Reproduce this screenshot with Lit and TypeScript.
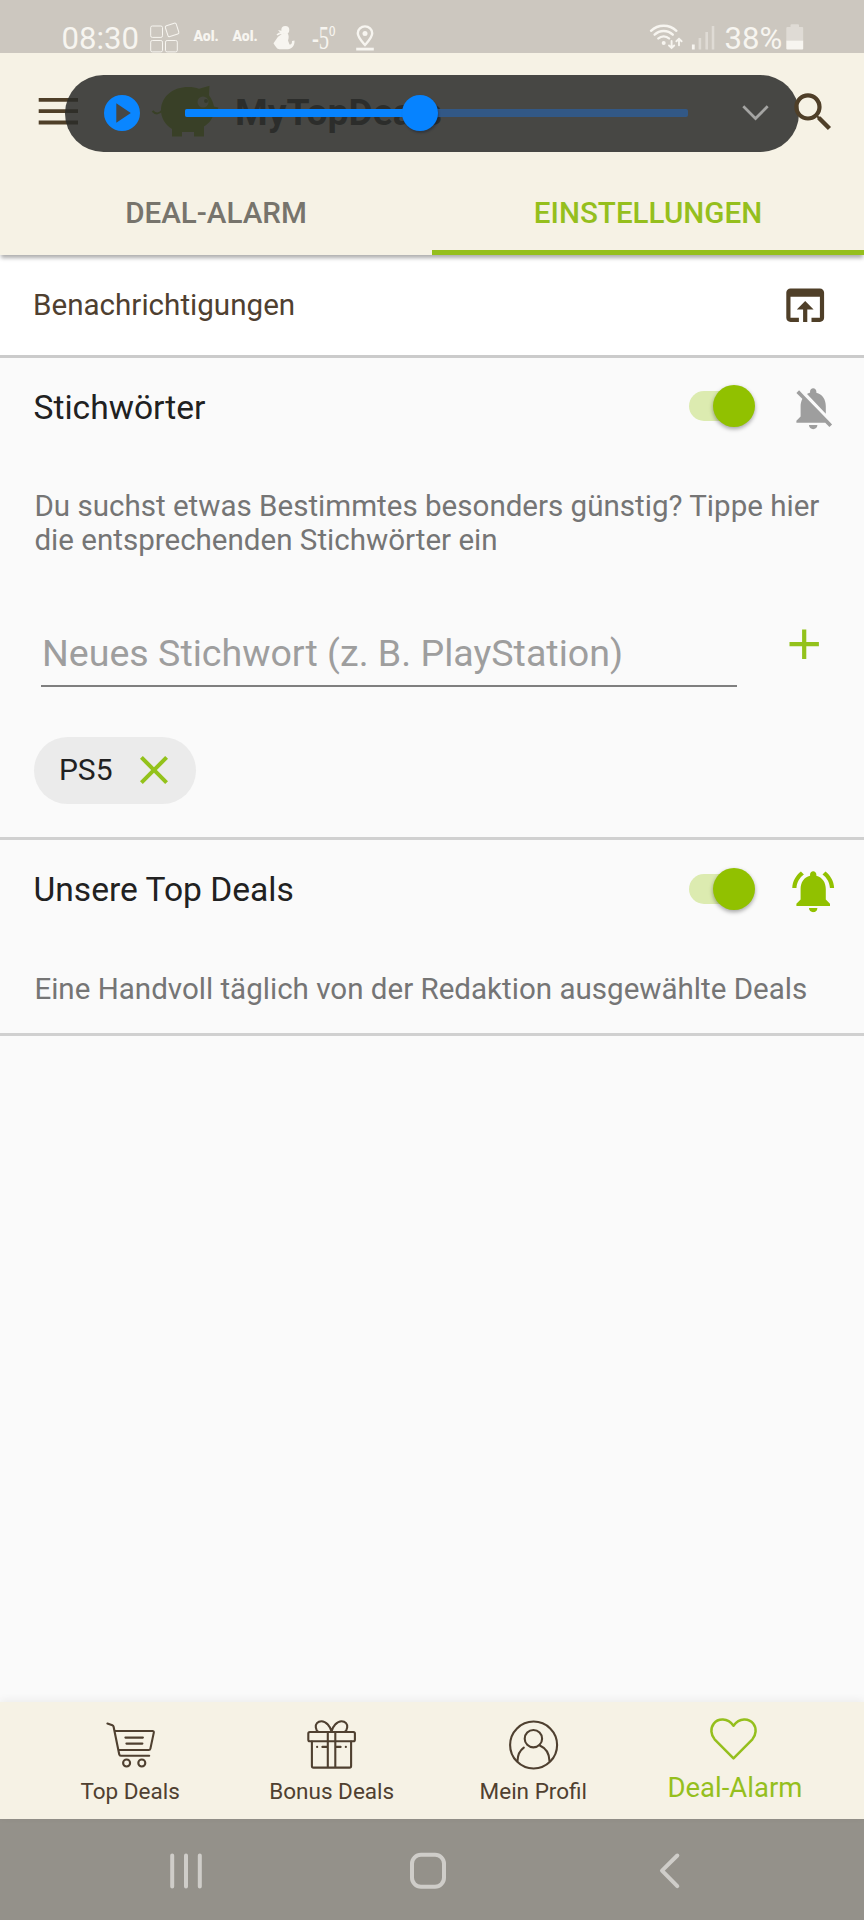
import { LitElement, html, css, svg } from "lit";
import { customElement, property, state } from "lit/decorators.js";
import { classMap } from "lit/directives/class-map.js";

@customElement("status-bar")
class StatusBar extends LitElement {
  static styles = css`
    :host { display: flex; align-items: center; box-sizing: border-box; height: 53px; padding: 24px 60.5px 0 61.5px;
      background: #ccc7bf; color: #f7f5f0; font-size: 31.1px; line-height: 29px; white-space: nowrap; }
    svg { display: block; flex: none; overflow: visible; fill: none; stroke: #f7f5f0; }
    .time { width: 78px; margin-right: 10.5px; }
    .aol { width: 25.6px; margin: 0 0 5px 13.4px; font-size: 14px; line-height: 16px; font-weight: 900; }
    .figure { margin-left: 15.4px; }
    .temp { width: 24px; margin: 0 19px 0 17px; height: 29px; }
    .temp text { font-family: "Liberation Serif", serif; fill: #f7f5f0; stroke: none; }
    .gap { flex: 1; }
    .battery-text { margin-left: 10px; width: 61px; }
    .solid { fill: #f7f5f0; stroke: none; }
  `;
  render() {
    return html`
      <span class="time">08:30</span>
      <svg width="30" height="30" viewBox="150 23.5 30 30" stroke-width="1">
        <rect x="150.7" y="25.5" width="11.8" height="11.4" rx="1.6" />
        <rect x="150.7" y="40" width="11.8" height="11.4" rx="1.6" />
        <rect x="165.5" y="40" width="11.8" height="11.4" rx="1.6" />
        <rect x="166.4" y="23.7" width="11.4" height="11.4" rx="1.6" transform="rotate(-18 172 29.4)" />
      </svg>
      <span class="aol">Aol.</span>
      <span class="aol">Aol.</span>
      <svg class="figure" width="22" height="30" viewBox="274 23.5 22 30">
        <circle class="solid" cx="286.3" cy="29.4" r="4" />
        <path class="solid" d="M279 29.5l4.500 1 1 2.500 4-.5c1.500 2 1.500 5 .5 7.500l1.500 4c2 .5 2.500-1 2.500-3.500l2.500-.5c.5 5-3 8.500-6.500 8.700h-7.500c-3 0-4-1-7-6l4.500-6.500 3.500-2.500z" />
        <path d="M278 34.500c1.500-1.500 3-2 5-1.800" stroke-width="1.6" />
      </svg>
      <svg class="temp" width="24" height="29" viewBox="0 24 24 29">
        <text x="0" y="48.500" font-size="33" textLength="23.5" lengthAdjust="spacingAndGlyphs">-5º</text>
      </svg>
      <svg width="20" height="30" viewBox="355 23.5 20 30">
        <path d="M365 44.500c-4-4.600-7.200-7.800-7.200-11.800a7.200 6.800 0 0 1 14.400 0c0 4-3.200 7.200-7.200 11.800z" stroke-width="2.400" />
        <circle class="solid" cx="365" cy="33" r="2.500" />
        <path d="M356.200 48.600h17.600" stroke-width="2.800" />
      </svg>
      <span class="gap"></span>
      <svg width="33" height="30" viewBox="648 23.5 33 30" stroke-width="2.400" stroke-linecap="round">
        <path d="M650 30.300a18.500 18.500 0 0 1 25.400 0M653.600 34.200a13 13 0 0 1 18.200 0M657.300 38a7.800 7.800 0 0 1 10.800 0" />
        <circle class="solid" cx="662.700" cy="42.500" r="2" />
        <path d="M670.600 40.500v6.500M668 45l2.600 2.500 2.600-2.500M678 44.800v-6.500M675.400 40.800l2.600-2.500 2.600 2.500" stroke-width="1.900" />
      </svg>
      <svg width="33" height="30" viewBox="681 23.5 33 30">
        <path d="M692.300 49v-5" stroke-width="2.800" />
        <path d="M698.900 49V37.500M705.700 49V31.500M712 49V25.500" stroke-width="2.600" opacity=".45" />
      </svg>
      <span class="battery-text">38%</span>
      <svg width="18" height="30" viewBox="786 23.5 18 30">
        <path class="solid" opacity=".45" d="M786.300 40V27.500q0-1 1-1h3.200v-1.800q0-1 1-1h6.500q1 0 1 1v1.800h3.200q1 0 1 1V40z" />
        <path class="solid" d="M786.300 40h16.900v8q0 1-1 1h-14.900q-1 0-1-1z" />
      </svg>
    `;
  }
}

@customElement("media-pill")
class MediaPill extends LitElement {
  static styles = css`
    :host { display: flex; align-items: center; box-sizing: border-box; height: 77px; border-radius: 38.5px;
      background: rgba(42, 43, 41, 0.86); padding: 0 30px 1px 38.500px; }
    svg { display: block; flex: none; }
    .track { display: flex; align-items: center; position: relative; width: 503px; height: 36px; margin: 0 54px 0 45.500px; }
    .rail { flex: 1; height: 8px; border-radius: 2px; background: #325886; overflow: hidden; }
    .played { height: 8px; background: #0683ff; }
    .thumb { position: absolute; top: 0; width: 36px; height: 36px; margin-left: -18px; border-radius: 50%;
      background: #0683ff; box-shadow: 1px 2px 2px rgba(0, 20, 50, 0.3); }
  `;
  @property({ type: Number }) progress = 46.7;
  render() {
    return html`
      <svg width="36" height="36" viewBox="0 0 36 36">
        <path fill="#0a86ff" fill-rule="evenodd" d="M18 0a18 18 0 1 0 0 36 18 18 0 0 0 0-36zM12.300 8.300L26.800 18 12.300 27.700z" />
      </svg>
      <div class="track">
        <div class="rail"><div class="played" style="width:${this.progress}%"></div></div>
        <div class="thumb" style="left:${this.progress}%"></div>
      </div>
      <svg width="27" height="18" viewBox="0 0 27 18"><path d="M1.300 2.300l12.200 12.200L25.700 2.300" fill="none" stroke="#a5a5a3" stroke-width="2.700" /></svg>
    `;
  }
}

@customElement("toggle-switch")
class ToggleSwitch extends LitElement {
  static styles = css`
    :host { display: flex; align-items: center; width: 66px; height: 42px; }
    .track { display: flex; align-items: center; justify-content: flex-end; width: 62px; height: 30px; border-radius: 15px; background: #dcebb0; }
    .thumb { flex: none; width: 42px; height: 42px; margin-right: -4px; border-radius: 50%; background: #91c100;
      box-shadow: 0 2px 4px rgba(0, 0, 0, 0.35); }
  `;
  render() {
    return html`<div class="track"><div class="thumb"></div></div>`;
  }
}

const bellOff = svg`<path fill="#9e9e9e" d="M20 18.690L7.840 6.140 5.270 3.490 4 4.760l2.800 2.800v.01c-.52.99-.8 2.160-.8 3.420v5l-2 2v1h13.730l2 2L21 19.720l-1-1.030zM12 22c1.110 0 2-.89 2-2h-4c0 1.110.89 2 2 2zm6-7.320V11c0-3.080-1.640-5.640-4.500-6.320V4c0-.83-.67-1.500-1.500-1.500s-1.500.67-1.500 1.500v.68c-.15.03-.29.08-.42.12-.1.03-.2.07-.3.11h-.01c-.24.100-.47.210-.7.320L18 14.680z"/>`;
const bellOn = svg`<path fill="#91c100" d="M7.580 4.080L6.150 2.650C3.750 4.480 2.170 7.300 2.030 10.500h2c.15-2.650 1.510-4.970 3.550-6.420zm12.390 6.420h2c-.15-3.200-1.730-6.020-4.120-7.850l-1.420 1.430c2.020 1.450 3.390 3.770 3.540 6.420zM18 11c0-3.070-1.640-5.640-4.500-6.320V4c0-.83-.67-1.500-1.500-1.500s-1.500.67-1.500 1.500v.68C7.630 5.360 6 7.920 6 11v5l-2 2v1h16v-1l-2-2v-5zm-6 11c.14 0 .27-.01.4-.04.65-.14 1.180-.58 1.440-1.180.1-.24.15-.5.15-.78h-4c.01 1.100.9 2 2.010 2z"/>`;

@customElement("alarm-section")
class AlarmSection extends LitElement {
  static styles = css`
    :host { display: block; border-bottom: 3px solid #d0d0d0; }
    .head { display: flex; align-items: center; height: 98px; padding: 0 25.600px 0 33.500px; }
    h2 { flex: 1; margin: 3px 0 0; font-size: 33.600px; line-height: 40px; font-weight: 400; color: #212121; }
    toggle-switch { margin-right: 33px; }
    svg { display: block; margin-top: 4.400px; }
    p { margin: 34px 30px 0 34.400px; font-size: 29.550px; line-height: 34.300px; color: #757575; }
  `;
  @property() heading = "";
  @property() description = "";
  @property({ type: Boolean }) ringing = false;
  render() {
    return html`
      <div class="head">
        <h2>${this.heading}</h2>
        <toggle-switch></toggle-switch>
        <svg width="50.4" height="50.4" viewBox="0 0 24 24">${this.ringing ? bellOn : bellOff}</svg>
      </div>
      <p>${this.description}</p>
      <slot></slot>
    `;
  }
}

interface NavEntry { label: string; view: string; icon: unknown; }
const navEntries: NavEntry[] = [
  { label: "Top Deals", view: "99.6 1714 60 56", icon: svg`
    <path d="M107 1723.500l5 1.800q1 .4 1.200 1.500l5.600 27.500q.3 1.400 1.700 1.400H148.800M114.700 1731H152q1.700 0 1.400 1.600l-3.400 16q-.3 1.400-1.700 1.400H118.500M125 1737.600h17.500M126 1743.600h16"/>
    <circle cx="126.200" cy="1763" r="3.500"/><circle cx="141.400" cy="1763" r="3.500"/>` },
  { label: "Bonus Deals", view: "301.4 1714 60 56", icon: svg`
    <rect x="308.700" y="1732" width="46.600" height="9.300" rx="1.500"/>
    <path d="M312.300 1741.500v24.500q0 1.600 1.600 1.600h36q1.600 0 1.600-1.600v-24.500M328.200 1732v35.500M335.700 1732v35.500M331.900 1731.500c-1-5-5.500-10.300-10-10.300-4 0-6.200 3-5.700 6.200.3 2 1 3.600 2.300 4.300M331.900 1731.500c1-5 5.500-10.300 10-10.300 4 0 6.200 3 5.700 6.200-.3 2-1 3.600-2.300 4.300M317.500 1746.900h.1M322.800 1746.900h5M336 1746.900h5M346.200 1746.900h.1"/>` },
  { label: "Mein Profil", view: "503 1714 60 56", icon: svg`
    <circle cx="533.600" cy="1745" r="23.500"/><circle cx="533.400" cy="1738.700" r="8.700"/>
    <path d="M517.500 1761c.2-6 2.400-10.500 6.300-13.300M539.800 1745.500c6 2.600 9.500 8 9.700 15.500"/>` },
  { label: "Deal-Alarm", view: "704.4 1714 60 56", icon: svg`
    <path stroke-width="2.500" d="M733.900 1725.800c-6-8.300-15.500-7.500-19.700-2.200-3.800 4.900-2.800 11.500.8 15.700l18.900 19 18.900-19c3.600-4.200 4.600-10.800.8-15.700-4.200-5.300-13.700-6.100-19.700 2.200z"/>` },
];

@customElement("app-root")
class AppRoot extends LitElement {
  static styles = css`
    :host { display: flex; flex-direction: column; position: relative; width: 864px; height: 1920px; overflow: hidden;
      font-family: Roboto, sans-serif; background: #fafafa; }
    svg { display: block; flex: none; }
    media-pill { position: absolute; left: 65px; top: 75px; width: 734px; }
    header { background: #f6f2e5; position: relative; box-shadow: 0 4px 4px -1px rgba(0, 0, 0, 0.32); }
    .toolbar { display: flex; align-items: center; box-sizing: border-box; height: 100px; padding: 18px 25.500px 0 38px; }
    .pig { margin-left: 71px; }
    .brand { flex: 1; margin-left: 15px; font-size: 37.300px; line-height: 44px; font-weight: 700; color: #3d3d3d; }
    .search { position: relative; z-index: 1; }
    .tabs { display: flex; height: 102px; }
    .tab { flex: 1; box-sizing: border-box; padding-top: 41px; text-align: center; font-size: 29.600px; line-height: 39px; font-weight: 500; color: #77746c; }
    .tab.active { color: #95bf1d; box-shadow: inset 0 -5px #95bf1d; }
    .row { display: flex; align-items: center; justify-content: space-between; height: 100px; padding: 0 34px 0 33px;
      background: #fff; border-bottom: 3px solid #cbcbcb; font-size: 29.600px; color: #4f4030; }
    .row span { padding-top: 0; }
    main { flex: 1; margin-top: -1px; }
    .entry { display: flex; align-items: flex-start; margin-top: 66px; padding-left: 41.400px; height: 62px; }
    input { box-sizing: border-box; width: 696px; height: 63px; margin: 0 42px 0 0; padding: 0 0 2px .6px; border: 0; border-radius: 0;
      border-bottom: 2px solid #7f7f7f; background: none; font: 400 37.600px/44px Roboto, sans-serif; color: #212121; outline: 0; }
    input::placeholder { color: #9e9e9e; opacity: 1; }
    .plus { margin-top: -5px; }
    .chips { display: flex; padding: 51px 33.500px 33px; }
    .chip { display: flex; align-items: center; box-sizing: border-box; height: 67px; width: 162.500px; padding-left: 25.400px;
      border-radius: 33.500px; background: #ebebeb; color: #212121; font-size: 30px; }
    .chip span { padding-bottom: 2px; }
    .chip svg { margin-left: 17.700px; }
    .last { height: 27px; }
    nav { position: relative; display: flex; justify-content: center; height: 117px; background: #f6f2e5; box-shadow: 0 -2px 8px rgba(0, 0, 0, 0.06); }
    .item { display: flex; flex-direction: column; align-items: center; width: 201.600px; padding-top: 12px; }
    .item span { padding: 1px 0 0 1px; font-size: 22.500px; line-height: 40px; color: #4f4030; }
    .item svg { fill: none; stroke: #4f4030; stroke-width: 2.100; stroke-linecap: round; stroke-linejoin: round; }
    .item.active span { color: #95bf1d; font-size: 27.500px; line-height: 34px; }
    .item.active svg { stroke: #95bf1d; }
    .system { display: flex; justify-content: center; height: 101px; padding-right: 8px; background: #94918a; }
    .system svg { width: 242px; height: 101px; fill: none; stroke: #cfcdc9; stroke-width: 4; stroke-linecap: round; stroke-linejoin: round; }
  `;
  @state() private tab = 1;
  @state() private page = 3;
  render() {
    return html`
      <status-bar></status-bar>
      <header>
        <div class="toolbar">
          <svg width="41" height="40" viewBox="38 92 41 40"><path fill="#4f3f28" d="M38.700 98H78v3.800H38.700zM38.700 109.200H78v3.800H38.700zM38.700 120.600H78v3.800H38.700z" /></svg>
          <svg class="pig" width="70" height="60" viewBox="150 82 70 60">
            <path fill="none" stroke="#95c11f" stroke-width="2" d="M152.500 111c3 3.500 7 3 9.500-.5" />
            <path fill="#95c11f" d="M161 109c1-13 12-22 27-22 5 0 8 .5 11 1.800l10.500-3-.5 9.500c3 4 4.500 8 5 11.200l4.500 1-2 4.500-2.500 1.500c-2 6-4.500 9.500-10 13v10h-10V132h-12v4.500h-10V129c-7-4-11.500-12-11-20z" />
            <circle cx="203" cy="102" r="5.500" fill="#dfe5bb" /><circle cx="206" cy="101" r="2" fill="#7c9438" />
          </svg>
          <div class="brand">MyTopDeals</div>
          <svg class="search" width="50.4" height="50.4" viewBox="0 0 24 24"><path fill="#4f3f28" d="M15.500 14h-.79l-.28-.27A6.471 6.471 0 0 0 16 9.500 6.500 6.500 0 1 0 9.500 16c1.610 0 3.090-.59 4.230-1.570l.27.280v.79l5 4.990L20.490 19l-4.990-5zm-6 0C7.010 14 5 11.990 5 9.500S7.010 5 9.500 5 14 7.010 14 9.500 11.990 14 9.500 14z" /></svg>
        </div>
        <div class="tabs">
          ${["DEAL-ALARM", "EINSTELLUNGEN"].map((t, i) => html`<div class=${classMap({ tab: true, active: i === this.tab })}>${t}</div>`)}
        </div>
      </header>
      <div class="row">
        <span>Benachrichtigungen</span>
        <svg width="50.4" height="50.4" viewBox="0 0 24 24"><path fill="#4f3f28" d="M19 4H5c-1.110 0-2 .9-2 2v12c0 1.100.89 2 2 2h4v-2H5V8h14v10h-4v2h4c1.100 0 2-.9 2-2V6c0-1.100-.89-2-2-2zm-7 6l-4 4h3v6h2v-6h3l-4-4z" /></svg>
      </div>
      <main>
        <alarm-section heading="Stichwörter" description="Du suchst etwas Bestimmtes besonders günstig? Tippe hier die entsprechenden Stichwörter ein">
          <div class="entry">
            <input placeholder="Neues Stichwort (z. B. PlayStation)" />
            <svg class="plus" width="50.4" height="50.4" viewBox="0 0 24 24"><path fill="#93c21b" d="M19 13h-6v6h-2v-6H5v-2h6V5h2v6h6v2z" /></svg>
          </div>
          <div class="chips">
            <div class="chip"><span>PS5</span>
              <svg width="48" height="48" viewBox="0 0 24 24"><path fill="#93c21b" d="M19 6.410L17.590 5 12 10.590 6.410 5 5 6.410 10.590 12 5 17.590 6.410 19 12 13.410 17.590 19 19 17.590 13.410 12z" /></svg>
            </div>
          </div>
        </alarm-section>
        <alarm-section ringing heading="Unsere Top Deals" description="Eine Handvoll täglich von der Redaktion ausgewählte Deals">
          <div class="last"></div>
        </alarm-section>
      </main>
      <nav>
        ${navEntries.map((n, i) => html`
          <div class=${classMap({ item: true, active: i === this.page })}>
            <svg width="60" height="56" viewBox=${n.view}>${n.icon}</svg><span>${n.label}</span>
          </div>`)}
      </nav>
      <div class="system">
        <svg viewBox="65 1819 242 101"><path d="M172.200 1855.500v31M186 1855.500v31M199.800 1855.500v31" /></svg>
        <svg viewBox="307 1819 242 101"><rect x="412" y="1854.800" width="32" height="32" rx="9" /></svg>
        <svg viewBox="549 1819 242 101"><path d="M677.300 1855.500L662 1870.700l15.300 15.500" /></svg>
      </div>
      <media-pill></media-pill>
    `;
  }
}
